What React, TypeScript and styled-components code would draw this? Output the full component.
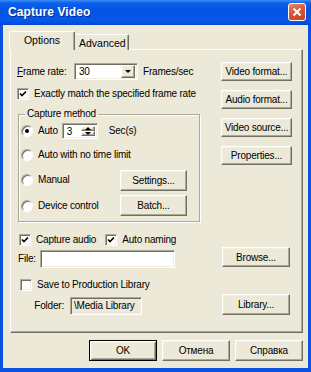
import React from "react";
import styled, { createGlobalStyle, css } from "styled-components";

const GlobalStyle = createGlobalStyle`
  html, body { margin: 0; padding: 0; background: #ffffff; }
  body {
    font-family: "Liberation Sans", Arial, sans-serif;
    font-size: 10px;
    color: #000;
  }
  * { box-sizing: border-box; }
`;

const raised = css`
  border: 1px solid;
  border-color: #ffffff #716f64 #716f64 #ffffff;
  box-shadow: inset -1px -1px #aca899, inset 1px 1px #f1efe2;
`;

const sunken = css`
  border: 1px solid;
  border-color: #aca899 #ffffff #ffffff #aca899;
  box-shadow: inset 1px 1px #716f64, inset -1px -1px #f1efe2;
`;

const Window = styled.div`
  width: 311px;
  height: 372px;
  display: flex;
  flex-direction: column;
  background: #0a53e0;
`;

const TitleBar = styled.div`
  height: 25px;
  flex: none;
  display: flex;
  align-items: center;
  justify-content: space-between;
  padding: 0 5px 1px 8px;
  background: linear-gradient(
    180deg,
    #3d8ff7 0%,
    #0d60ea 12%,
    #0454e4 40%,
    #0558ea 80%,
    #0348d6 100%
  );
`;

const Title = styled.span`
  font-family: "Liberation Sans", Arial, sans-serif;
  font-weight: bold;
  font-size: 12px;
  color: #ffffff;
  text-shadow: 1px 1px #0b2a8a;
  letter-spacing: 0.1px;
`;

const CloseButton = styled.div`
  width: 18px;
  height: 18px;
  border: 1px solid #ffffff;
  border-radius: 3px;
  background: linear-gradient(160deg, #ec8667 0%, #dd5434 45%, #c8401f 100%);
  display: flex;
  align-items: center;
  justify-content: center;
`;

const Body = styled.div`
  flex: 1;
  margin: 0 3px 4px 3px;
  background: #ece9d8;
  display: flex;
  flex-direction: column;
  padding: 7px 5px 6px 7px;
`;

const TabStrip = styled.div`
  display: flex;
  align-items: flex-end;
  height: 18px;
  margin-bottom: -1px;
`;

const Tab = styled.div<{ $active?: boolean; $w: number }>`
  width: ${(p) => p.$w}px;
  height: ${(p) => (p.$active ? 19 : 16)}px;
  margin-left: ${(p) => (p.$active ? -1 : 0)}px;
  position: relative;
  z-index: ${(p) => (p.$active ? 1 : 0)};
  background: #ece9d8;
  border-top: 1px solid #ffffff;
  border-left: ${(p) => (p.$active ? "1px solid #ffffff" : "none")};
  border-right: 1px solid #716f64;
  box-shadow: inset -1px 0 #aca899;
  border-radius: 2px 2px 0 0;
  display: flex;
  align-items: center;
  justify-content: ${(p) => (p.$active ? "center" : "flex-start")};
  padding: ${(p) => (p.$active ? "0 0 2px 0" : "0 0 0 4px")};
  font-size: 10.5px;
`;

const Panel = styled.div`
  height: 284px;
  border: 1px solid;
  border-color: #ffffff #716f64 #716f64 #ffffff;
  box-shadow: inset -1px -1px #aca899;
  display: flex;
  flex-direction: column;
  padding: 12px 0 0 6px;
`;

const TopSection = styled.div`
  display: flex;
  align-items: flex-start;
`;

const LeftCol = styled.div`
  width: 183px;
  padding-top: 1px;
  display: flex;
  flex-direction: column;
`;

const RightCol = styled.div`
  width: 71px;
  margin-left: 21px;
  display: flex;
  flex-direction: column;
  gap: 9px;
`;

const Button = styled.button<{ $w: number; $h: number; $default?: boolean }>`
  width: ${(p) => p.$w}px;
  height: ${(p) => p.$h}px;
  flex: none;
  padding: 0;
  margin: 0;
  background: #ece9d8;
  font-family: "Liberation Sans", Arial, sans-serif;
  font-size: 10px;
  letter-spacing: -0.2px;
  color: #000;
  ${raised}
  ${(p) =>
    p.$default &&
    css`
      border: 1px solid #000000;
      box-shadow: inset 1px 1px #ffffff, inset -1px -1px #716f64,
        inset 2px 2px #f1efe2, inset -2px -2px #aca899;
    `}
`;

const Text = styled.span`
  white-space: nowrap;
  letter-spacing: -0.2px;
  line-height: 12px;
`;

const Mnemonic = styled.span`
  text-decoration: underline;
`;

const FrameRow = styled.div`
  display: flex;
  align-items: center;
  height: 17px;
`;

const FrameLabel = styled(Text)`
  width: 57px;
`;

const Combo = styled.div`
  width: 64px;
  height: 17px;
  ${sunken}
  background: #ffffff;
  display: flex;
  align-items: center;
  justify-content: space-between;
  padding: 2px 2px 2px 4px;
`;

const DropButton = styled.div`
  width: 14px;
  height: 13px;
  background: #ece9d8;
  ${raised}
  display: flex;
  align-items: center;
  justify-content: center;
`;

const Arrow = styled.span<{ $up?: boolean }>`
  width: 0;
  height: 0;
  border-left: 3px solid transparent;
  border-right: 3px solid transparent;
  ${(p) =>
    p.$up
      ? css`border-bottom: 3px solid #000;`
      : css`border-top: 3px solid #000;`}
`;

const SideText = styled(Text)<{ $ml: number }>`
  margin-left: ${(p) => p.$ml}px;
`;

const CheckLabel = styled.label<{ $mt?: number; $ml?: number }>`
  display: flex;
  align-items: center;
  gap: 5px;
  height: 13px;
  margin-top: ${(p) => p.$mt ?? 0}px;
  margin-left: ${(p) => p.$ml ?? 0}px;
`;

const Box = styled.span`
  width: 12px;
  height: 12px;
  flex: none;
  background: #ffffff;
  ${sunken}
  display: flex;
  align-items: center;
  justify-content: center;
`;

const Group = styled.fieldset`
  margin: 8px 0 0 1px;
  width: 182px;
  padding: 0 0 3px 2px;
  border: 1px solid #aca899;
  box-shadow: inset 1px 1px #ffffff, 1px 1px #ffffff;
  min-width: 0;
`;

const Legend = styled.legend`
  padding: 0 2px;
  margin-left: 4px;
  line-height: 12px;
  font-size: 10px;
  letter-spacing: -0.2px;
`;

const RadioRow = styled.div<{ $h: number }>`
  height: ${(p) => p.$h}px;
  display: flex;
  align-items: center;
  padding-right: 12px;
`;

const Radio = styled.span`
  width: 12px;
  height: 12px;
  flex: none;
  border-radius: 50%;
  border: 1px solid;
  border-color: #aca899 #ffffff #ffffff #aca899;
  box-shadow: inset 1px 1px #716f64;
  background: #ffffff;
  display: flex;
  align-items: center;
  justify-content: center;
  margin-right: 5px;
`;

const Dot = styled.span`
  width: 4px;
  height: 4px;
  border-radius: 50%;
  background: #000;
`;

const Spinner = styled.div`
  width: 36px;
  height: 16px;
  margin-left: 4px;
  ${sunken}
  background: #ffffff;
  display: flex;
  align-items: stretch;
  padding: 2px 2px 2px 4px;
`;

const SpinValue = styled.span`
  flex: 1;
  line-height: 12px;
`;

const SpinButtons = styled.div`
  width: 14px;
  display: flex;
  flex-direction: column;
`;

const SpinButton = styled.div`
  flex: 1;
  background: #ece9d8;
  ${raised}
  display: flex;
  align-items: center;
  justify-content: center;
`;

const Push = styled.div`
  flex: 1;
`;

const BottomRow = styled.div<{ $mt: number; $h: number }>`
  width: 275px;
  height: ${(p) => p.$h}px;
  margin-top: ${(p) => p.$mt}px;
  display: flex;
  align-items: flex-start;
`;

const InlineLabel = styled(Text)<{ $mt: number; $ml: number; $w?: number }>`
  margin-top: ${(p) => p.$mt}px;
  margin-left: ${(p) => p.$ml}px;
  line-height: 18px;
  ${(p) => p.$w && css`width: ${p.$w}px; text-align: right;`}
`;

const Field = styled.div<{ $w: number; $mt: number; $ml: number; $grey?: boolean }>`
  width: ${(p) => p.$w}px;
  height: 18px;
  margin-top: ${(p) => p.$mt}px;
  margin-left: ${(p) => p.$ml}px;
  ${sunken}
  background: ${(p) => (p.$grey ? "#ece9d8" : "#ffffff")};
  padding: 0 2px 0 3px;
  line-height: 16px;
  white-space: nowrap;
  overflow: hidden;
  letter-spacing: -0.2px;
`;

const RightButton = styled(Button)`
  margin-left: auto;
  margin-right: 2px;
`;

const Footer = styled.div`
  margin-top: 7px;
  display: flex;
  justify-content: flex-end;
  gap: 5px;
`;

const Check = () => (
  <svg width="8" height="8" viewBox="0 0 8 8">
    <path d="M1 3.5 L3 5.5 L7 1.5" stroke="#000" strokeWidth="1.6" fill="none" />
  </svg>
);

export default function App() {
  return (
    <>
      <GlobalStyle />
      <Window>
        <TitleBar>
          <Title>Capture Video</Title>
          <CloseButton>
            <svg width="10" height="10" viewBox="0 0 10 10">
              <path d="M1.5 1.5 L8.5 8.5 M8.5 1.5 L1.5 8.5" stroke="#fff" strokeWidth="2" />
            </svg>
          </CloseButton>
        </TitleBar>
        <Body>
          <TabStrip>
            <Tab $active $w={66}>Options</Tab>
            <Tab $w={54}>Advanced</Tab>
          </TabStrip>
          <Panel>
            <TopSection>
              <LeftCol>
                <FrameRow>
                  <FrameLabel>
                    <Mnemonic>F</Mnemonic>rame rate:
                  </FrameLabel>
                  <Combo>
                    <Text>30</Text>
                    <DropButton>
                      <Arrow />
                    </DropButton>
                  </Combo>
                  <SideText $ml={5}>Frames/sec</SideText>
                </FrameRow>
                <CheckLabel $mt={7}>
                  <Box>
                    <Check />
                  </Box>
                  <Text>Exactly match the specified frame rate</Text>
                </CheckLabel>
                <Group>
                  <Legend>Capture method</Legend>
                  <RadioRow $h={22}>
                    <Radio>
                      <Dot />
                    </Radio>
                    <Text>Auto</Text>
                    <Spinner>
                      <SpinValue>3</SpinValue>
                      <SpinButtons>
                        <SpinButton>
                          <Arrow $up />
                        </SpinButton>
                        <SpinButton>
                          <Arrow />
                        </SpinButton>
                      </SpinButtons>
                    </Spinner>
                    <SideText $ml={11}>Sec(s)</SideText>
                  </RadioRow>
                  <RadioRow $h={25}>
                    <Radio />
                    <Text>Auto with no time limit</Text>
                  </RadioRow>
                  <RadioRow $h={26}>
                    <Radio />
                    <Text>Manual</Text>
                    <Push />
                    <Button $w={67} $h={21}>Settings...</Button>
                  </RadioRow>
                  <RadioRow $h={25}>
                    <Radio />
                    <Text>Device control</Text>
                    <Push />
                    <Button $w={67} $h={21}>Batch...</Button>
                  </RadioRow>
                </Group>
              </LeftCol>
              <RightCol>
                <Button $w={71} $h={19}>Video format...</Button>
                <Button $w={71} $h={19}>Audio format...</Button>
                <Button $w={71} $h={19}>Video source...</Button>
                <Button $w={71} $h={19}>Properties...</Button>
              </RightCol>
            </TopSection>

            <BottomRow $mt={11} $h={13}>
              <CheckLabel $ml={2}>
                <Box>
                  <Check />
                </Box>
                <Text>Capture audio</Text>
              </CheckLabel>
              <CheckLabel $ml={9}>
                <Box>
                  <Check />
                </Box>
                <Text>Auto naming</Text>
              </CheckLabel>
            </BottomRow>

            <BottomRow $mt={1} $h={21}>
              <InlineLabel $mt={3} $ml={1}>File:</InlineLabel>
              <Field $w={135} $mt={3} $ml={4} />
              <RightButton $w={68} $h={20}>Browse...</RightButton>
            </BottomRow>

            <BottomRow $mt={10} $h={12}>
              <CheckLabel $ml={3}>
                <Box />
                <Text>Save to Production Library</Text>
              </CheckLabel>
            </BottomRow>

            <BottomRow $mt={4} $h={21}>
              <InlineLabel $mt={3} $ml={0} $w={47}>Folder:</InlineLabel>
              <Field $w={72} $mt={3} $ml={6} $grey>
                \Media Library
              </Field>
              <RightButton $w={68} $h={21}>Library...</RightButton>
            </BottomRow>
          </Panel>
          <Footer>
            <Button $w={68} $h={21} $default>OK</Button>
            <Button $w={68} $h={21}>Отмена</Button>
            <Button $w={68} $h={21}>Справка</Button>
          </Footer>
        </Body>
      </Window>
    </>
  );
}
